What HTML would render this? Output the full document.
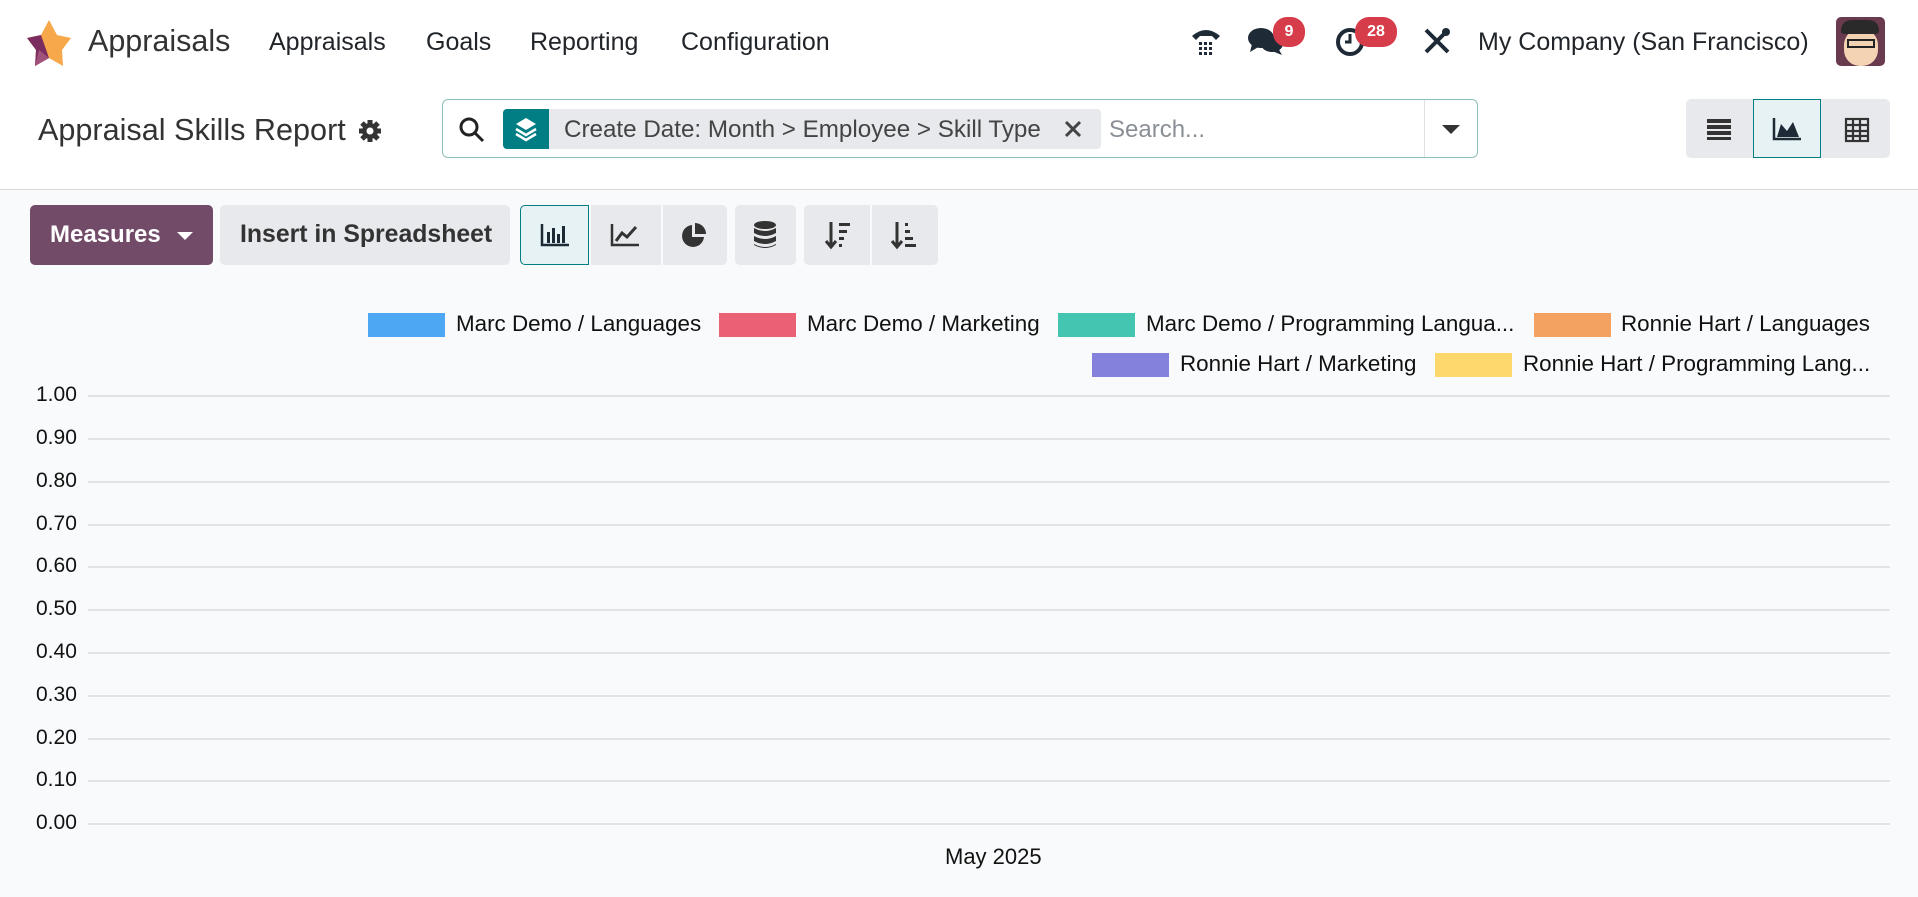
<!DOCTYPE html>
<html><head><meta charset="utf-8"><style>
*{box-sizing:border-box;margin:0;padding:0}
body{width:1918px;height:897px;overflow:hidden;font-family:"Liberation Sans",sans-serif;color:#212529;background:#f9fafb;position:relative}
.a{position:absolute}
.nav{left:0;top:0;width:1918px;height:190px;background:#fff;border-bottom:1px solid #d8dadd}
.t{white-space:nowrap}
.btn{position:absolute;background:#e7e9ed;border-radius:5px}
.badge{position:absolute;background:#d63c4a;color:#fff;font-size:16px;font-weight:bold;border-radius:14px;height:30px;line-height:30px;text-align:center}
.lg{position:absolute;font-size:22.4px;white-space:nowrap;color:#111}
.sw{position:absolute;width:77px;height:24px}
.yl{position:absolute;left:36px;font-size:21px;color:#111}
.gl{position:absolute;left:88px;width:1802px;height:2px;background:#e1e3e6}
</style></head><body>
<div class="a nav"></div>
<svg class="a" style="left:27px;top:20px" width="44" height="46" viewBox="0 0 44 46"><polygon points="22,0 30,15 44,18 35,30 36,46 22,38 8,46 9,30 0,18 14,15" fill="#f6a84a"/><polygon points="0,18 14,15 22,38 8,46 9,30" fill="#7a2d5e"/><polygon points="22,38 8,46 12,30" fill="#a1527a"/></svg>
<div class="a t" style="left:88px;top:24px;font-size:30.5px;color:#333">Appraisals</div>
<div class="a t" style="left:269px;top:28px;font-size:25px">Appraisals</div>
<div class="a t" style="left:426px;top:28px;font-size:25px">Goals</div>
<div class="a t" style="left:530px;top:28px;font-size:25px">Reporting</div>
<div class="a t" style="left:681px;top:28px;font-size:25px">Configuration</div>
<svg class="a" style="left:1190px;top:24px" width="32" height="32" viewBox="0 0 32 32"><path d="M2 12 Q16 0 30 12 L26 16 L22 12 L10 12 L6 16Z" fill="#1f2a37"/><g fill="#1f2a37"><rect x="9" y="18" width="3" height="3"/><rect x="14" y="18" width="3" height="3"/><rect x="19" y="18" width="3" height="3"/><rect x="9" y="23" width="3" height="3"/><rect x="14" y="23" width="3" height="3"/><rect x="19" y="23" width="3" height="3"/><rect x="9" y="28" width="3" height="3"/><rect x="14" y="28" width="3" height="3"/><rect x="19" y="28" width="3" height="3"/></g></svg>
<svg class="a" style="left:1248px;top:26px" width="36" height="30" viewBox="0 0 36 30"><ellipse cx="13" cy="12" rx="13" ry="10" fill="#1f2a37"/><path d="M4 18 L2 26 L12 20Z" fill="#1f2a37"/><ellipse cx="24" cy="18" rx="11" ry="8" fill="#1f2a37"/><path d="M30 22 L34 29 L24 25Z" fill="#1f2a37"/></svg>
<div class="badge" style="left:1273px;top:17px;width:32px">9</div>
<svg class="a" style="left:1334px;top:26px" width="32" height="32" viewBox="0 0 32 32"><circle cx="16" cy="16" r="12" fill="none" stroke="#1f2a37" stroke-width="4"/><path d="M16 8 V16 H11" stroke="#1f2a37" stroke-width="3" fill="none"/></svg>
<div class="badge" style="left:1355px;top:17px;width:42px">28</div>
<svg class="a" style="left:1422px;top:26px" width="30" height="30" viewBox="0 0 30 30"><path d="M4 4 L26 26 M26 4 L4 26" stroke="#1f2a37" stroke-width="4"/><circle cx="24" cy="6" r="4" fill="#1f2a37"/></svg>
<div class="a t" style="left:1478px;top:28px;font-size:25px">My Company (San Francisco)</div>
<div class="a" style="left:1836px;top:17px;width:49px;height:49px;border-radius:5px;background:#6a3a4f;overflow:hidden"><div class="a" style="left:8px;top:12px;width:34px;height:37px;border-radius:16px;background:#f3d3b3"></div><div class="a" style="left:5px;top:3px;width:38px;height:14px;border-radius:10px 10px 3px 3px;background:#2a2a2a"></div><div class="a" style="left:11px;top:22px;width:28px;height:9px;border:2px solid #222"></div></div>
<div class="a t" style="left:38px;top:113px;font-size:30.6px;color:#333">Appraisal Skills Report</div>
<svg class="a" style="left:358px;top:119px" width="24" height="24" viewBox="0 0 24 24"><circle cx="12" cy="12" r="8" fill="#333"/><g stroke="#333" stroke-width="5"><path d="M12 1V23M1 12H23M4 4L20 20M20 4L4 20"/></g><circle cx="12" cy="12" r="3.5" fill="#fff"/></svg>
<div class="a" style="left:442px;top:99px;width:1036px;height:59px;border:1px solid #8fbfbd;border-radius:6px;background:#fff"></div>
<svg class="a" style="left:458px;top:116px" width="28" height="28" viewBox="0 0 28 28"><circle cx="11" cy="11" r="8" fill="none" stroke="#222" stroke-width="3"/><path d="M17 17 L25 25" stroke="#222" stroke-width="3"/></svg>
<div class="a" style="left:503px;top:109px;width:46px;height:40px;background:#017e84;border-radius:4px 0 0 4px"></div>
<svg class="a" style="left:514px;top:116px" width="24" height="26" viewBox="0 0 24 26"><path d="M12 2 L22 8 L12 14 L2 8Z" fill="#fff"/><path d="M2 13 L12 19 L22 13 M2 18 L12 24 L22 18" stroke="#fff" stroke-width="2.5" fill="none"/></svg>
<div class="a" style="left:549px;top:109px;width:552px;height:40px;background:#e7e9ed;border-radius:0 4px 4px 0"></div>
<div class="a t" style="left:564px;top:116px;font-size:24.2px;color:#444">Create Date: Month &gt; Employee &gt; Skill Type</div>
<svg class="a" style="left:1063px;top:119px" width="20" height="20" viewBox="0 0 20 20"><path d="M3 3L17 17M17 3L3 17" stroke="#444" stroke-width="3"/></svg>
<div class="a t" style="left:1109px;top:116px;font-size:24px;color:#8a8f96">Search...</div>
<div class="a" style="left:1424px;top:100px;width:1px;height:57px;background:#dee2e6"></div>
<div class="a" style="left:1442px;top:125px;border-left:9px solid transparent;border-right:9px solid transparent;border-top:9px solid #333"></div>
<div class="btn" style="left:1686px;top:99px;width:204px;height:59px"></div>
<div class="a" style="left:1753px;top:99px;width:68px;height:59px;background:#e6f2f3;border:1px solid #017e84"></div>
<svg class="a" style="left:1705px;top:117px" width="28" height="24" viewBox="0 0 28 24"><g fill="#333"><rect x="2" y="2" width="24" height="4"/><rect x="2" y="8" width="24" height="4"/><rect x="2" y="14" width="24" height="4"/><rect x="2" y="20" width="24" height="3"/></g></svg>
<svg class="a" style="left:1772px;top:116px" width="30" height="26" viewBox="0 0 30 26"><path d="M2 2V23H29" stroke="#1f2a37" stroke-width="2.5" fill="none"/><path d="M5 21 L9 8 L15 15 L21 6 L27 21Z" fill="#1f2a37"/></svg>
<svg class="a" style="left:1843px;top:116px" width="28" height="28" viewBox="0 0 28 28"><g fill="none" stroke="#333" stroke-width="2.2"><rect x="3" y="3" width="22" height="22"/><path d="M3 9H25M3 15H25M3 20H25M10 3V25M17 3V25"/></g></svg>
<div class="btn" style="left:30px;top:205px;width:183px;height:60px;background:#714b67"></div>
<div class="a t" style="left:50px;top:221px;font-size:24px;font-weight:bold;color:#fff">Measures</div>
<div class="a" style="left:177px;top:232px;border-left:8px solid transparent;border-right:8px solid transparent;border-top:8px solid #fff"></div>
<div class="btn" style="left:220px;top:205px;width:290px;height:60px"></div>
<div class="a t" style="left:240px;top:221px;font-size:24.8px;font-weight:bold;color:#333">Insert in Spreadsheet</div>
<div class="btn" style="left:520px;top:205px;width:207px;height:60px"></div>
<div class="a" style="left:520px;top:205px;width:69px;height:60px;background:#e6f2f3;border:1px solid #017e84;border-radius:5px 0 0 5px"></div>
<div class="a" style="left:661px;top:205px;width:2px;height:60px;background:#f9fafb"></div>
<div class="a" style="left:589px;top:205px;width:2px;height:60px;background:#f9fafb"></div>
<svg class="a" style="left:540px;top:222px" width="30" height="26" viewBox="0 0 30 26"><path d="M2 2V23H29" stroke="#1f2a37" stroke-width="2.5" fill="none"/><g fill="#1f2a37"><rect x="7" y="10" width="3" height="11"/><rect x="12" y="6" width="3" height="15"/><rect x="17" y="12" width="3" height="9"/><rect x="22" y="4" width="3" height="17"/></g></svg>
<svg class="a" style="left:610px;top:222px" width="30" height="26" viewBox="0 0 30 26"><path d="M2 2V23H29" stroke="#333" stroke-width="2.5" fill="none"/><path d="M6 19 L12 11 L17 15 L26 5" stroke="#333" stroke-width="3" fill="none"/></svg>
<svg class="a" style="left:680px;top:221px" width="28" height="28" viewBox="0 0 28 28"><path d="M12 4 A11 11 0 1 0 24 16 H12Z" fill="#333"/><path d="M15 2 A11 11 0 0 1 26 13 H15Z" fill="#333"/></svg>
<div class="btn" style="left:735px;top:205px;width:61px;height:60px"></div>
<svg class="a" style="left:752px;top:220px" width="26" height="30" viewBox="0 0 26 30"><g fill="#333"><ellipse cx="13" cy="5" rx="11" ry="4"/><path d="M2 8 Q13 14 24 8 V13 Q13 19 2 13Z"/><path d="M2 16 Q13 22 24 16 V21 Q13 27 2 21Z"/><path d="M2 24 Q13 30 24 24 V25 Q13 31 2 25Z"/></g></svg>
<div class="btn" style="left:804px;top:205px;width:134px;height:60px"></div>
<div class="a" style="left:870px;top:205px;width:2px;height:60px;background:#f9fafb"></div>
<svg class="a" style="left:824px;top:220px" width="28" height="30" viewBox="0 0 28 30"><path d="M7 2V26M2 21L7 27L12 21" stroke="#333" stroke-width="3" fill="none"/><g fill="#333"><rect x="15" y="3" width="11" height="3"/><rect x="15" y="10" width="8" height="3"/><rect x="15" y="17" width="5" height="3"/><rect x="15" y="24" width="3" height="3"/></g></svg>
<svg class="a" style="left:890px;top:220px" width="28" height="30" viewBox="0 0 28 30"><path d="M7 2V26M2 21L7 27L12 21" stroke="#333" stroke-width="3" fill="none"/><g fill="#333"><rect x="15" y="3" width="3" height="3"/><rect x="15" y="10" width="5" height="3"/><rect x="15" y="17" width="8" height="3"/><rect x="15" y="24" width="11" height="3"/></g></svg>
<div class="sw" style="left:368px;top:313px;background:#4ea7f2"></div><div class="lg" style="left:456px;top:311px">Marc Demo / Languages</div>
<div class="sw" style="left:719px;top:313px;background:#ea6175"></div><div class="lg" style="left:807px;top:311px">Marc Demo / Marketing</div>
<div class="sw" style="left:1058px;top:313px;background:#43c5b1"></div><div class="lg" style="left:1146px;top:311px">Marc Demo / Programming Langua...</div>
<div class="sw" style="left:1534px;top:313px;background:#f4a261"></div><div class="lg" style="left:1621px;top:311px">Ronnie Hart / Languages</div>
<div class="sw" style="left:1092px;top:353px;background:#8481dd"></div><div class="lg" style="left:1180px;top:351px">Ronnie Hart / Marketing</div>
<div class="sw" style="left:1435px;top:353px;background:#ffd86d"></div><div class="lg" style="left:1523px;top:351px">Ronnie Hart / Programming Lang...</div>
<div class="gl" style="top:395px"></div><div class="yl" style="top:383px">1.00</div>
<div class="gl" style="top:438px"></div><div class="yl" style="top:426px">0.90</div>
<div class="gl" style="top:481px"></div><div class="yl" style="top:469px">0.80</div>
<div class="gl" style="top:524px"></div><div class="yl" style="top:512px">0.70</div>
<div class="gl" style="top:566px"></div><div class="yl" style="top:554px">0.60</div>
<div class="gl" style="top:609px"></div><div class="yl" style="top:597px">0.50</div>
<div class="gl" style="top:652px"></div><div class="yl" style="top:640px">0.40</div>
<div class="gl" style="top:695px"></div><div class="yl" style="top:683px">0.30</div>
<div class="gl" style="top:738px"></div><div class="yl" style="top:726px">0.20</div>
<div class="gl" style="top:780px"></div><div class="yl" style="top:768px">0.10</div>
<div class="gl" style="top:823px"></div><div class="yl" style="top:811px">0.00</div>
<div class="lg" style="left:945px;top:844px;font-size:22px">May 2025</div>
</body></html>
